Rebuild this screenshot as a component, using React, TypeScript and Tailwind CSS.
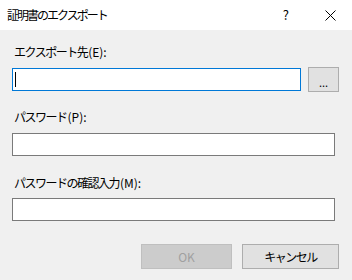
import React from "react";

const font = { fontFamily: '"Noto Sans CJK JP", "Noto Sans", sans-serif' };

function Field({ jp, key2, children, className }: { jp: string; key2: string; children: React.ReactNode; className?: string }) {
  return (
    <div className={className}>
      <div className="h-4 pl-[2px] text-[12px] leading-4 text-black">
        <span className="tracking-[-1.5px]">{jp}</span>
        <span className="ml-[1px] tracking-[0px]">{key2}</span>
      </div>
      {children}
    </div>
  );
}

export default function App() {
  return (
    <div style={font} className="w-[352px] h-[280px] bg-[#f0f0f0] overflow-hidden">
      {/* Title bar */}
      <div className="h-[30px] bg-white flex items-center pl-[7px] pr-[16px]">
        <span className="text-[12px] tracking-[-2px] text-black">証明書のエクスポート</span>
        <span className="ml-auto text-[13px] text-black mr-[36px]">?</span>
        <svg width="11" height="11" viewBox="0 0 11 11">
          <path d="M0.5 0.5 L10.5 10.5 M10.5 0.5 L0.5 10.5" stroke="#000" strokeWidth="1" />
        </svg>
      </div>

      <div className="pl-[12px] pr-[13px]">
        <Field jp="エクスポート先" key2="(E):" className="pt-[14px]">
          <div className="mt-[7px] flex items-center gap-[7px]">
            <div className="w-[289px] h-[23px] bg-white border border-[#0078d7] flex items-center pl-[2px]">
              <div className="w-px h-[15px] bg-black" />
            </div>
            <button className="w-[31px] h-[25px] bg-[#e1e1e1] border border-[#adadad] text-[11px] leading-none pt-[5px] text-black">
              ...
            </button>
          </div>
        </Field>

        <Field jp="パスワード" key2="(P):" className="pt-[17px]">
          <div className="mt-[8px] w-[323px] h-[23px] bg-white border border-[#7a7a7a]" />
        </Field>

        <Field jp="パスワードの確認入力" key2="(M):" className="pt-[19px]">
          <div className="mt-[7px] w-[323px] h-[23px] bg-white border border-[#7a7a7a]" />
        </Field>

        <div className="mt-[23px] flex justify-end gap-[10px]">
          <button className="w-[91px] h-[25px] bg-[#cccccc] border border-[#bfbfbf] text-[12px] text-[#a0a0a0]">
            OK
          </button>
          <button className="w-[97px] h-[25px] bg-[#e1e1e1] border border-[#adadad] text-[12px] tracking-[-1.5px] text-black">
            キャンセル
          </button>
        </div>
      </div>
    </div>
  );
}
